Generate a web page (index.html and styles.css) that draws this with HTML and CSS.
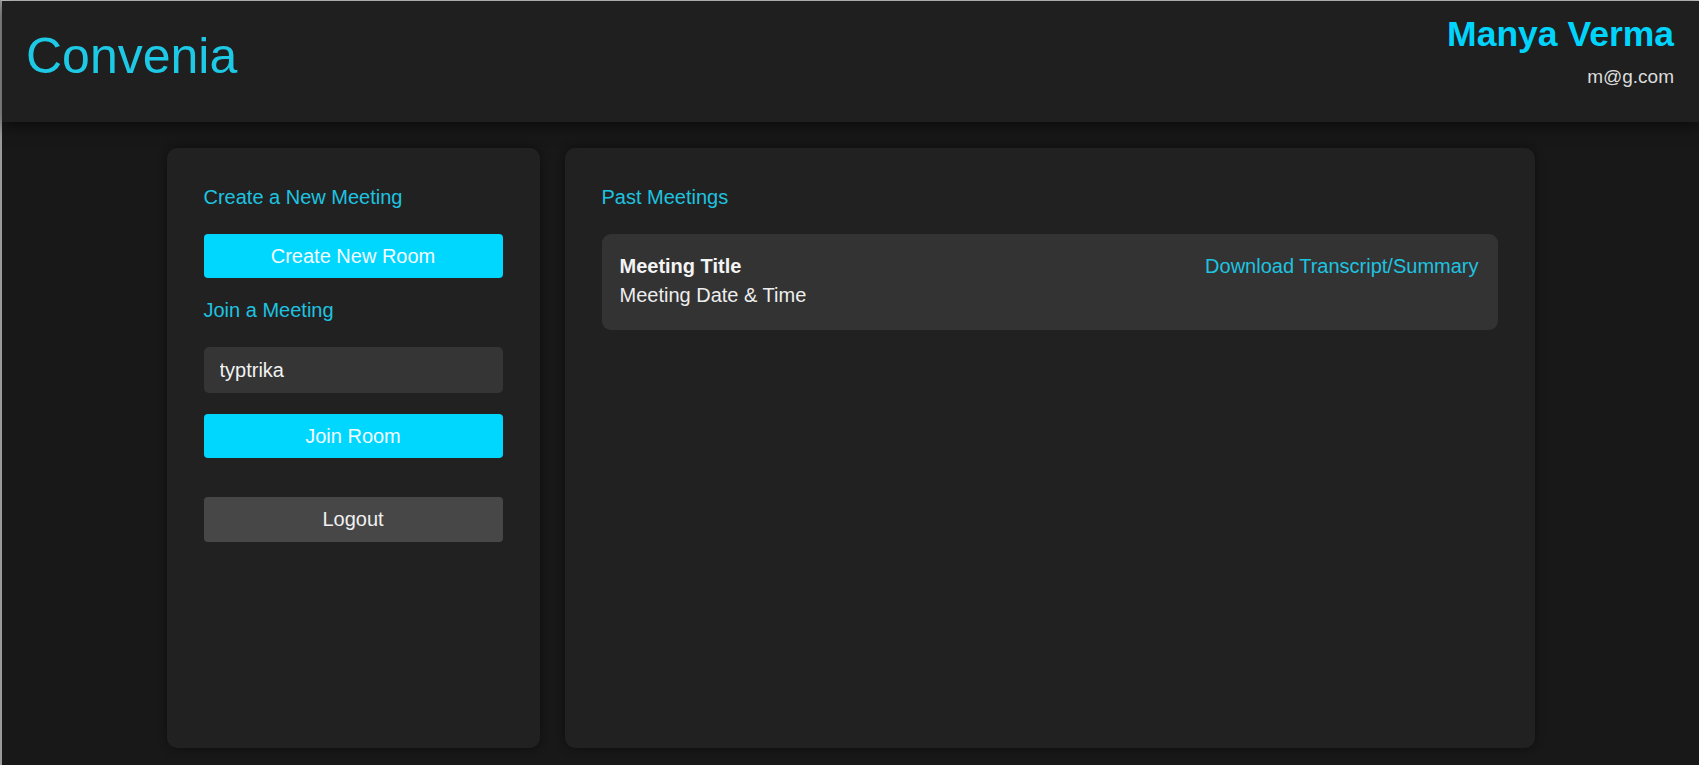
FILE: index.html
```html
<!DOCTYPE html>
<html lang="en">
<head>
<meta charset="utf-8">
<title>Convenia</title>
<link rel="stylesheet" href="styles.css">
</head>
<body>
<div class="frame">
  <header class="topbar">
    <h1 class="brand">Convenia</h1>
    <div class="user">
      <div class="user-name">Manya Verma</div>
      <div class="user-email">m@g.com</div>
    </div>
  </header>
  <main class="content">
    <section class="card side">
      <h3 class="card-title">Create a New Meeting</h3>
      <button class="btn btn-primary btn-create">Create New Room</button>
      <h3 class="card-title">Join a Meeting</h3>
      <input class="room-input" type="text" value="typtrika">
      <button class="btn btn-primary btn-join">Join Room</button>
      <button class="btn btn-logout">Logout</button>
    </section>
    <section class="card history">
      <h3 class="card-title">Past Meetings</h3>
      <div class="meeting">
        <div class="meeting-info">
          <div class="meeting-title">Meeting Title</div>
          <div class="meeting-date">Meeting Date &amp; Time</div>
        </div>
        <a class="meeting-link" href="#">Download Transcript/Summary</a>
      </div>
    </section>
  </main>
</div>
</body>
</html>
```

FILE: styles.css
```css
* { box-sizing: border-box; }
html, body {
  margin: 0;
  padding: 0;
  height: 100%;
  background: #181818;
  font-family: "Liberation Sans", Arial, sans-serif;
  color: #f2f2f2;
  overflow: hidden;
}
.frame {
  height: 765px;
  border-top: 1px solid #c8c8c8;
  border-left: 2px solid #9a9a9a;
  display: flex;
  flex-direction: column;
}
.topbar {
  height: 121px;
  flex: none;
  background: #1f1f1f;
  box-shadow: 0 4px 14px rgba(0, 0, 0, 0.55);
  display: flex;
  justify-content: space-between;
  align-items: flex-start;
  padding: 0 25px 0 24px;
  position: relative;
  z-index: 1;
}
.brand {
  margin: 26px 0 0;
  font-size: 50px;
  font-weight: normal;
  line-height: 58px;
  color: #1ec9e6;
}
.user {
  text-align: right;
  padding-top: 12px;
}
.user-name {
  font-size: 35.5px;
  font-weight: bold;
  line-height: 42px;
  color: #00d4fc;
}
.user-email {
  margin-top: 11px;
  font-size: 19px;
  line-height: 22px;
  color: #dcdcdc;
}
.content {
  flex: 1;
  display: flex;
  justify-content: center;
  gap: 25px;
  padding: 26px 0 17px;
}
.card {
  background: #212121;
  border-radius: 10px;
  box-shadow: 0 0 10px rgba(0, 0, 0, 0.45);
  padding: 38px 37px 37px;
  display: flex;
  flex-direction: column;
  align-items: stretch;
}
.side { width: 373px; }
.history { width: 970px; }
.card-title {
  margin: 0 0 25px;
  font-size: 20px;
  font-weight: normal;
  line-height: 23px;
  color: #1ec3e0;
}
.btn {
  display: block;
  width: 100%;
  height: 44px;
  border: none;
  border-radius: 4px;
  font-family: inherit;
  font-size: 20px;
  color: #f4fbff;
  cursor: pointer;
}
.btn-primary { background: #00d7ff; }
.btn-create { margin-bottom: 21px; }
.btn-create + .card-title { margin-bottom: 25px; }
.room-input {
  display: block;
  width: 100%;
  height: 46px;
  border: none;
  border-radius: 5px;
  background: #353535;
  color: #f2f2f2;
  font-family: inherit;
  font-size: 20px;
  padding: 0 16px;
  margin-bottom: 21px;
  outline: none;
}
.btn-join { margin-bottom: 39px; }
.btn-logout {
  background: #474747;
  height: 45px;
  color: #f0f0f0;
}
.meeting {
  background: #333333;
  border-radius: 9px;
  padding: 18px 19px 20px 18px;
  display: flex;
  justify-content: space-between;
  align-items: flex-start;
  line-height: 29px;
  font-size: 20px;
}
.meeting-title {
  font-weight: bold;
  color: #f4f4f4;
}
.meeting-date { color: #eeeeee; }
.meeting-link {
  color: #1ec3e0;
  text-decoration: none;
}
```
